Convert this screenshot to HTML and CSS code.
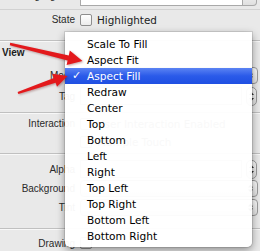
FILE: index.html
```html
<!DOCTYPE html>
<html>

<head>
	<title>Image View Mode</title>
	<link rel="stylesheet" href="styles.css">
</head>

<body>
	<div class="panel">
		<div class="row row-image">
			<span class="label">Highlighted</span>
			<div class="field"></div>
			<span class="combo-btn"></span>
		</div>
		<div class="row row-state">
			<span class="label">State</span>
			<span class="check"></span>
			<span class="ctl-text">Highlighted</span>
		</div>
		<div class="sep sep-view"></div>
		<div class="section-title">View</div>
		<div class="row row-mode">
			<span class="label">Mode</span>
			<div class="popup">
				<svg class="updown" width="7" height="11" viewBox="0 0 7 11"><path d="M1 4.5 3.5 1.5 6 4.5ZM1 6.5 3.5 9.5 6 6.5Z" fill="#333" /></svg>
			</div>
		</div>
		<div class="row row-tag">
			<span class="label">Tag</span>
			<div class="field field-num"></div>
			<div class="stepper">
				<svg width="7" height="13" viewBox="0 0 7 13"><path d="M1 5 3.5 2 6 5ZM1 8 3.5 11 6 8Z" fill="#333" /></svg>
			</div>
		</div>
		<div class="sep sep-interaction"></div>
		<div class="row row-interaction">
			<span class="label">Interaction</span>
			<span class="check"></span>
			<span class="ctl-text ghost">User Interaction Enabled</span>
		</div>
		<div class="row row-touch">
			<span class="label"></span>
			<span class="check"></span>
			<span class="ctl-text ghost">Multiple Touch</span>
		</div>
		<div class="sep sep-alpha"></div>
		<div class="row row-alpha">
			<span class="label">Alpha</span>
			<div class="field field-num"></div>
			<div class="stepper">
				<svg width="7" height="13" viewBox="0 0 7 13"><path d="M1 5 3.5 2 6 5ZM1 8 3.5 11 6 8Z" fill="#333" /></svg>
			</div>
		</div>
		<div class="row row-bg">
			<span class="label">Background</span>
			<div class="popup">
				<svg class="updown" width="7" height="11" viewBox="0 0 7 11"><path d="M1 4.5 3.5 1.5 6 4.5ZM1 6.5 3.5 9.5 6 6.5Z" fill="#333" /></svg>
			</div>
		</div>
		<div class="row row-tint">
			<span class="label">Tint</span>
			<div class="popup">
				<svg class="updown" width="7" height="11" viewBox="0 0 7 11"><path d="M1 4.5 3.5 1.5 6 4.5ZM1 6.5 3.5 9.5 6 6.5Z" fill="#333" /></svg>
			</div>
		</div>
		<div class="sep sep-drawing"></div>
		<div class="row row-drawing">
			<span class="label">Drawing</span>
			<span class="check"></span>
		</div>
	</div>

	<ul class="menu">
		<li>Scale To Fill</li>
		<li>Aspect Fit</li>
		<li class="selected"><span class="tick">&#10003;</span>Aspect Fill</li>
		<li>Redraw</li>
		<li>Center</li>
		<li>Top</li>
		<li>Bottom</li>
		<li>Left</li>
		<li>Right</li>
		<li>Top Left</li>
		<li>Top Right</li>
		<li>Bottom Left</li>
		<li>Bottom Right</li>
	</ul>

	<svg class="arrows" width="260" height="251" viewBox="0 0 260 251">
		<polygon points="10.2,42.8 68.8,55.6 69.8,50.6 82.5,61 66.6,65 67.6,60.4 9.8,45.2" fill="#e3191c" />
		<polygon points="17.6,91.9 53.8,77.9 52.4,73.8 67.5,76 57,86.8 55.6,82.7 18.4,94.1" fill="#e3191c" />
	</svg>
</body>

</html>
```

FILE: styles.css
```css
* {
	box-sizing: border-box;
}

body {
	margin: 0;
	width: 260px;
	height: 251px;
	overflow: hidden;
	background: #e9e9e9;
	font-family: "DejaVu Sans", sans-serif;
	color: #1c1c1c;
}

.panel {
	margin-top: -12px;
}

.row {
	display: flex;
	align-items: center;
}

.label {
	flex: none;
	width: 75px;
	margin-right: 5px;
	text-align: right;
	font-family: "Liberation Sans", sans-serif;
	font-size: 10px;
	color: #2a2a2a;
	white-space: nowrap;
}

.ctl-text {
	font-size: 10.4px;
	white-space: nowrap;
}

.ghost {
	color: #555;
}

.check {
	flex: none;
	width: 12px;
	height: 12px;
	margin-right: 5px;
	border: 1px solid #8e8e8e;
	border-radius: 2px;
	background: linear-gradient(#ffffff, #ececec);
}

.row-image {
	height: 22px;
	align-items: flex-end;
	border-bottom: 1px solid #d2d2d2;
}

.row-image .label {
	padding-bottom: 8px;
}

.field {
	flex: 1;
	height: 19px;
	border: 1px solid #a9a9a9;
	background: #fff;
}

.row-image .field {
	margin-bottom: 3px;
	flex: none;
	width: 163px;
}

.combo-btn {
	flex: none;
	width: 14px;
	height: 19px;
	margin-bottom: 3px;
	border: 1px solid #a9a9a9;
	border-left: none;
	border-radius: 0 4px 4px 0;
	background: linear-gradient(#fafafa, #e0e0e0);
}

.row-state {
	height: 19px;
}

.sep {
	height: 2px;
	border-top: 1px solid #c0c0c0;
	border-bottom: 1px solid #f8f8f8;
}

.sep-view {
	margin-top: 11px;
}

.section-title {
	height: 23px;
	padding: 5px 0 0 2px;
	font-family: "Liberation Sans", sans-serif;
	font-weight: bold;
	font-size: 10px;
}

.row-mode {
	height: 20px;
}

.popup {
	flex: 1;
	display: flex;
	align-items: center;
	justify-content: flex-end;
	height: 17px;
	margin-right: 2px;
	padding: 0 3px 0 6px;
	border: 1px solid #9b9b9b;
	border-radius: 4px;
	background: linear-gradient(#fdfdfd, #e2e2e2);
}

.row-tag {
	height: 22px;
}

.field-num {
	height: 18px;
	margin-right: 4px;
}

.stepper {
	flex: none;
	display: flex;
	align-items: center;
	justify-content: center;
	width: 11px;
	height: 19px;
	margin-right: 3px;
	border: 1px solid #9b9b9b;
	border-radius: 5px;
	background: linear-gradient(#fbfbfb, #dedede);
}

.sep-interaction {
	margin-top: 5px;
}

.row-interaction {
	height: 19px;
}

.row-touch {
	height: 18px;
}

.sep-alpha {
	margin-top: 2px;
}

.row-alpha {
	height: 20px;
	margin-top: 4px;
}

.row-bg {
	height: 18px;
}

.row-tint {
	height: 20px;
}

.sep-drawing {
	margin-top: 11px;
}

.row-drawing {
	height: 18px;
	margin-top: 4px;
}

.menu {
	position: absolute;
	left: 65px;
	top: 32px;
	width: 187px;
	margin: 0;
	padding: 4px 0 3px;
	list-style: none;
	background: rgba(255, 255, 255, 0.96);
	border-radius: 0 0 5px 5px;
	box-shadow: 0 3px 9px rgba(0, 0, 0, 0.4), 0 0 0 1px rgba(0, 0, 0, 0.1);
	font-size: 10.6px;
	color: #000;
}

.menu li {
	position: relative;
	height: 16px;
	line-height: 16px;
	padding-left: 22px;
	white-space: nowrap;
}

.menu .selected {
	color: #fff;
	background: linear-gradient(#5b83f3, #2a5ae9 50%, #1f4fe2);
}

.tick {
	position: absolute;
	left: 7px;
	top: 0;
	font-size: 11px;
	font-weight: bold;
}

.arrows {
	position: absolute;
	left: 0;
	top: 0;
	pointer-events: none;
	filter: drop-shadow(1px 1px 1px rgba(90, 0, 0, 0.35));
}
```
